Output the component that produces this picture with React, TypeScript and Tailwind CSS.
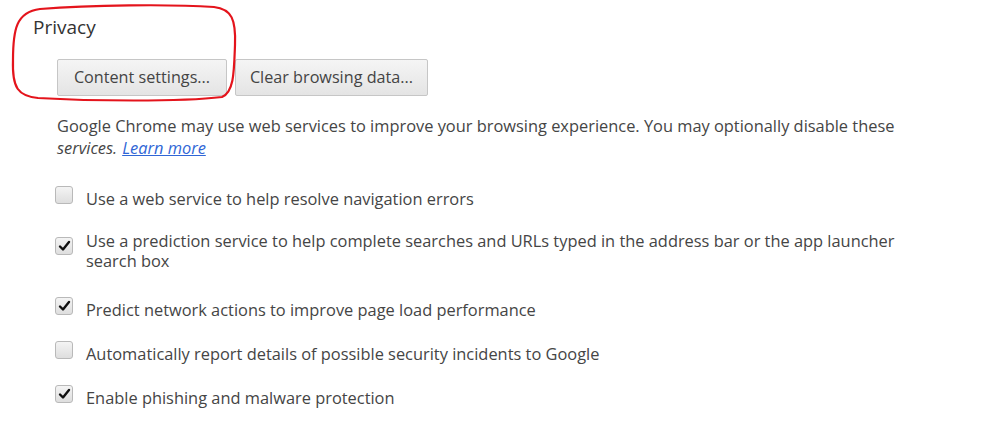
import React from "react";

const Check = ({ checked }: { checked: boolean }) => (
  <span className="relative flex h-[18px] w-[18px] shrink-0 items-center justify-center rounded-[3px] border border-[#b9b9b9] bg-gradient-to-b from-[#f4f4f4] to-[#dedede]">
    {checked && (
      <svg width="13" height="12" viewBox="0 0 13 12">
        <path d="M2 6.5 L5 9.5 L11 2" fill="none" stroke="#111" strokeWidth="2.4" strokeLinecap="round" strokeLinejoin="round" />
      </svg>
    )}
  </span>
);

const Row = ({ checked, children, top = "mt-0", box = "mt-[-3px]" }: { checked: boolean; children: React.ReactNode; top?: string; box?: string }) => (
  <div className={`flex items-start gap-[13px] ${top}`}>
    <div className={box}>
      <Check checked={checked} />
    </div>
    <div className="leading-[20px]">{children}</div>
  </div>
);

export default function App() {
  return (
    <div className="relative h-[434px] w-[1000px] overflow-hidden bg-white font-['Open_Sans',sans-serif] text-[16.4px] text-[#454545]">
      {/* red annotation loop */}
      <svg className="absolute left-0 top-0" width="260" height="110" viewBox="0 0 260 110">
        <path
          d="M40 9 C90 5 170 4 214 7 C232 9 236 20 235 45 C234 72 234 92 222 97 C180 102 90 101 38 98 C18 96 12 88 13 60 C13 30 16 12 40 9 Z"
          fill="none"
          stroke="#e4141c"
          strokeWidth="2.2"
        />
      </svg>

      <div className="pl-[33px] pt-[14px]">
        <h2 className="text-[19px] leading-[26px] text-[#333]">Privacy</h2>
        <div className="mt-[19px] flex gap-[8px] pl-[24px]">
          <button className="h-[37px] w-[170px] rounded-[2px] border border-[#c6c6c6] bg-gradient-to-b from-[#f5f5f5] to-[#e4e4e4] text-[16.2px] text-[#444]">
            Content settings...
          </button>
          <button className="h-[37px] w-[193px] rounded-[2px] border border-[#c6c6c6] bg-gradient-to-b from-[#f5f5f5] to-[#e4e4e4] text-[16.2px] text-[#444]">
            Clear browsing data...
          </button>
        </div>
        <div className="mt-[20px] w-[884px] pl-[24px] leading-[20px]">
          <p>Google Chrome may use web services to improve your browsing experience. You may optionally disable these</p>
          <p className="mt-[2px] flex h-[20px] items-center gap-[5px]">
            <span className="italic">services.</span>
            <a className="italic text-[#2f66d6] underline">Learn more</a>
          </p>
        </div>

        <div className="pl-[22px]">
          <Row checked={false} top="mt-[31px]">Use a web service to help resolve navigation errors</Row>
          <Row checked={true} top="mt-[22px]" box="mt-[6px]">
            <span className="block w-[830px]">
              Use a prediction service to help complete searches and URLs typed in the address bar or the app launcher search box
            </span>
          </Row>
          <Row checked={true} top="mt-[29px]">Predict network actions to improve page load performance</Row>
          <Row checked={false} top="mt-[24px]">Automatically report details of possible security incidents to Google</Row>
          <Row checked={true} top="mt-[24px]">Enable phishing and malware protection</Row>
        </div>
      </div>
    </div>
  );
}
